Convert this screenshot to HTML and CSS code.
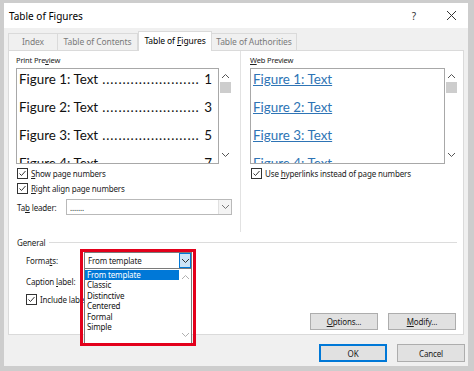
FILE: index.html
```html
<!doctype html>
<html>
<head>
  <meta charset="utf-8" />
  <title>Table of Figures</title>
  <link rel="stylesheet" href="styles.css">
</head>

<body>
  <div class="dialog">
    <div class="titlebar">
      <span class="title">Table of Figures</span>
      <span class="help">?</span>
      <svg class="close" width="11" height="11" viewBox="0 0 11 11"><path d="M1 1 L10 10 M10 1 L1 10" stroke="#333" stroke-width="1" fill="none"/></svg>
    </div>

    <div class="tabs">
      <div class="tab tab-index">Index</div>
      <div class="tab tab-toc">Table of Contents</div>
      <div class="tab tab-tof active">Table of <u>F</u>igures</div>
      <div class="tab tab-toa">Table of Authorities</div>
    </div>

    <div class="panel">
      <div class="previews">
        <div class="col">
          <div class="label">Print Pre<u>v</u>iew</div>
          <div class="preview">
            <div class="lines">
              <div class="line"><span class="txt">Figure 1: Text</span><span class="dots">........................</span><span class="num">1</span></div>
              <div class="line"><span class="txt">Figure 2: Text</span><span class="dots">........................</span><span class="num">3</span></div>
              <div class="line"><span class="txt">Figure 3: Text</span><span class="dots">........................</span><span class="num">5</span></div>
              <div class="line"><span class="txt">Figure 4: Text</span><span class="dots">........................</span><span class="num">7</span></div>
            </div>
            <div class="scroll">
              <svg width="9" height="6" viewBox="0 0 9 6"><path d="M1 5 L4.5 1.5 L8 5" stroke="#555" fill="none"/></svg>
              <div class="thumb"></div>
              <svg class="down" width="9" height="6" viewBox="0 0 9 6"><path d="M1 1 L4.5 4.5 L8 1" stroke="#555" fill="none"/></svg>
            </div>
          </div>
          <div class="check">
            <svg width="11" height="11" viewBox="0 0 11 11"><rect x="0.5" y="0.5" width="10" height="10" fill="#fff" stroke="#333"/><path d="M2.5 5.5 L4.5 7.5 L8.5 3" stroke="#333" fill="none"/></svg>
            <span><u>S</u>how page numbers</span>
          </div>
          <div class="check">
            <svg width="11" height="11" viewBox="0 0 11 11"><rect x="0.5" y="0.5" width="10" height="10" fill="#fff" stroke="#333"/><path d="M2.5 5.5 L4.5 7.5 L8.5 3" stroke="#333" fill="none"/></svg>
            <span><u>R</u>ight align page numbers</span>
          </div>
          <div class="leader-row">
            <span class="leader-label">Ta<u>b</u> leader:</span>
            <div class="select leader-select">
              <span class="value">.......</span>
              <span class="arrow"><svg width="9" height="6" viewBox="0 0 9 6"><path d="M1 1 L4.5 4.5 L8 1" stroke="#777" fill="none"/></svg></span>
            </div>
          </div>
        </div>

        <div class="col col-web">
          <div class="label"><u>W</u>eb Preview</div>
          <div class="preview web">
            <div class="lines">
              <div class="line"><a>Figure 1: Text</a></div>
              <div class="line"><a>Figure 2: Text</a></div>
              <div class="line"><a>Figure 3: Text</a></div>
              <div class="line"><a>Figure 4: Text</a></div>
            </div>
            <div class="scroll">
              <svg width="9" height="6" viewBox="0 0 9 6"><path d="M1 5 L4.5 1.5 L8 5" stroke="#555" fill="none"/></svg>
              <div class="thumb"></div>
              <svg class="down" width="9" height="6" viewBox="0 0 9 6"><path d="M1 1 L4.5 4.5 L8 1" stroke="#555" fill="none"/></svg>
            </div>
          </div>
          <div class="check">
            <svg width="11" height="11" viewBox="0 0 11 11"><rect x="0.5" y="0.5" width="10" height="10" fill="#fff" stroke="#333"/><path d="M2.5 5.5 L4.5 7.5 L8.5 3" stroke="#333" fill="none"/></svg>
            <span>Use <u>h</u>yperlinks instead of page numbers</span>
          </div>
        </div>
      </div>

      <div class="general">
        <div class="group-title"><span>General</span><span class="rule"></span></div>
        <div class="field">
          <span class="field-label">Forma<u>t</u>s:</span>
          <div class="formats">
            <div class="select open">
              <span class="value">From template</span>
              <span class="arrow"><svg width="9" height="6" viewBox="0 0 9 6"><path d="M1 1 L4.5 4.5 L8 1" stroke="#333" fill="none"/></svg></span>
            </div>
            <div class="droplist">
              <div class="items">
                <div class="item selected">From template</div>
                <div class="item">Classic</div>
                <div class="item">Distinctive</div>
                <div class="item">Centered</div>
                <div class="item">Formal</div>
                <div class="item">Simple</div>
              </div>
              <div class="list-scroll">
                <svg width="9" height="6" viewBox="0 0 9 6"><path d="M1 5 L4.5 1.5 L8 5" stroke="#b0b0b0" fill="none"/></svg>
                <svg width="9" height="6" viewBox="0 0 9 6"><path d="M1 1 L4.5 4.5 L8 1" stroke="#b0b0b0" fill="none"/></svg>
              </div>
            </div>
            <div class="highlight"></div>
          </div>
        </div>
        <div class="field">
          <span class="field-label">Caption <u>l</u>abel:</span>
        </div>
        <div class="check include">
          <svg width="11" height="11" viewBox="0 0 11 11"><rect x="0.5" y="0.5" width="10" height="10" fill="#fff" stroke="#333"/><path d="M2.5 5.5 L4.5 7.5 L8.5 3" stroke="#333" fill="none"/></svg>
          <span>Include label and number</span>
        </div>
        <div class="buttons">
          <button><u>O</u>ptions...</button>
          <button><u>M</u>odify...</button>
        </div>
      </div>
    </div>

    <div class="footer">
      <button class="default">OK</button>
      <button>Cancel</button>
    </div>
  </div>
</body>
</html>
```

FILE: styles.css
```css
* {
  box-sizing: border-box;
}
body {
  margin: 0;
  background: #cdcdcd;
  font-family: "Noto Sans", sans-serif;
  font-size: 8px;
  letter-spacing: -0.15px;
  color: #1a1a1a;
}
u {
  text-decoration-thickness: 1px;
  text-underline-offset: 1px;
}
.dialog {
  margin: 3px 6px 5px 4px;
  width: 464px;
  height: 363px;
  background: #f0f0f0;
  display: flex;
  flex-direction: column;
}
.titlebar {
  height: 25px;
  background: #fff;
  display: flex;
  align-items: center;
  padding-left: 5px;
}
.titlebar .title {
  font-size: 10px;
  letter-spacing: 0;
  color: #000;
  flex: 1;
}
.titlebar .help {
  font-size: 10px;
  color: #333;
  margin-right: 30px;
}
.titlebar .close {
  margin-right: 11px;
}

/* tabs */
.tabs {
  display: flex;
  align-items: flex-end;
  height: 22px;
  padding: 3px 0 0 4px;
}
.tab {
  height: 17px;
  line-height: 16px;
  text-align: center;
  color: #7a7a7a;
  font-size: 8.5px;
  letter-spacing: -0.1px;
  border: 1px solid #dadada;
  border-bottom: none;
  background: #f0f0f0;
}
.tab + .tab {
  border-left: none;
}
.tab-index { width: 50px; }
.tab-toc { width: 80px; }
.tab-tof { width: 74px; }
.tab-toa { width: 85px; }
.tab.active {
  height: 20px;
  line-height: 18px;
  background: #fff;
  color: #000;
  border-left: 1px solid #dadada;
  margin-bottom: -1px;
  position: relative;
}

/* panel */
.panel {
  margin: 0 4px;
  height: 285px;
  background: #fff;
  border: 1px solid #dadada;
  padding: 0 5px 0 7px;
}
.previews {
  display: grid;
  grid-template-columns: 216px 1fr;
  column-gap: 8px;
  height: 181px;
}
.col {
  padding-top: 3px;
}
.col-web {
  border-left: 1px solid #e2e2e2;
  padding-left: 9px;
}
.label {
  font-size: 7.5px;
  line-height: 12px;
  margin-bottom: 2px;
  color: #222;
}
.preview {
  display: flex;
  height: 96px;
}
.lines {
  width: 203px;
  border: 1px solid #a8a8a8;
  padding: 0 6px 0 2px;
  overflow: hidden;
  font-family: Lato, "Liberation Sans", sans-serif;
  font-size: 13.4px;
  letter-spacing: 0;
  color: #111;
}
.web .lines {
  width: 195px;
}
.line {
  height: 28px;
  line-height: 20px;
  display: flex;
  white-space: nowrap;
}
.line .dots {
  margin-left: 4px;
  letter-spacing: 0.9px;
}
.line .num {
  margin-left: auto;
}
.line a {
  color: #2e74b5;
  text-decoration: underline;
  text-decoration-thickness: 1px;
}
.scroll {
  width: 13px;
  display: flex;
  flex-direction: column;
  align-items: center;
  padding-top: 5px;
}
.scroll .thumb {
  width: 11px;
  height: 11px;
  background: #cdcdcd;
  margin-top: 3px;
}
.scroll .down {
  margin-top: auto;
  margin-bottom: 6px;
}
.check {
  display: flex;
  align-items: center;
  height: 15px;
  padding-left: 1px;
  gap: 3px;
  color: #222;
}
.preview + .check {
  margin-top: 2px;
}
.leader-row {
  display: flex;
  align-items: center;
  margin-top: 3px;
  padding-left: 1px;
}
.leader-label {
  width: 49px;
}
.select {
  display: flex;
  align-items: center;
  height: 16px;
  border: 1px solid #b9b9b9;
  background: #fff;
}
.select .value {
  flex: 1;
  padding-left: 3px;
}
.select .arrow {
  width: 13px;
  height: 100%;
  display: flex;
  align-items: center;
  justify-content: center;
}
.leader-select {
  width: 166px;
}
.leader-select .arrow {
  background: #f4f4f4;
  border-left: 1px solid #e0e0e0;
}

/* general */
.general {
  padding-top: 4px;
}
.group-title {
  display: flex;
  align-items: center;
  height: 12px;
  padding-left: 1px;
  color: #222;
}
.group-title .rule {
  flex: 1;
  height: 1px;
  background: #dcdcdc;
  margin: 0 1px 0 4px;
}
.field {
  display: flex;
  align-items: center;
  height: 17px;
  margin-top: 4px;
  padding-left: 10px;
}
.field + .field {
  margin-top: 4px;
}
.field-label {
  width: 58px;
}
.formats {
  position: relative;
  width: 108px;
}
.select.open {
  border-color: #7a7a7a;
  height: 17px;
}
.select.open .arrow {
  width: 12px;
  background: #cce4f7;
  border: 1px solid #0078d7;
}
.droplist {
  position: absolute;
  left: 0;
  top: 17px;
  width: 108px;
  height: 76px;
  background: #fff;
  border: 1px solid #7a7a7a;
  border-top: none;
  display: flex;
  z-index: 2;
}
.items {
  flex: 1;
  padding-top: 1px;
}
.item {
  height: 10.4px;
  line-height: 10.4px;
  padding-left: 2px;
  color: #111;
}
.item.selected {
  background: #0078d7;
  color: #fff;
}
.list-scroll {
  width: 12px;
  display: flex;
  flex-direction: column;
  justify-content: space-between;
  align-items: center;
  padding: 5px 0 6px;
}
.highlight {
  position: absolute;
  left: -4px;
  top: -3px;
  width: 116px;
  height: 97px;
  border: 3px solid #e3001b;
  z-index: 3;
}
.include {
  margin-top: 2px;
  padding-left: 10px;
  white-space: nowrap;
}
.buttons {
  display: flex;
  justify-content: flex-end;
  gap: 10px;
  margin-top: 6px;
  padding-right: 2px;
}
button {
  width: 68px;
  height: 17px;
  padding: 0;
  background: #e1e1e1;
  border: 1px solid #adadad;
  font-family: "Noto Sans", sans-serif;
  font-size: 8px;
  letter-spacing: -0.15px;
  color: #1a1a1a;
}

/* footer */
.footer {
  display: flex;
  justify-content: flex-end;
  gap: 10px;
  margin-top: 9px;
  padding-right: 3px;
}
.footer button {
  height: 18px;
}
.footer button.default {
  border: 1px solid #0078d7;
  box-shadow: inset 0 0 0 1px #0078d7;
}
```
